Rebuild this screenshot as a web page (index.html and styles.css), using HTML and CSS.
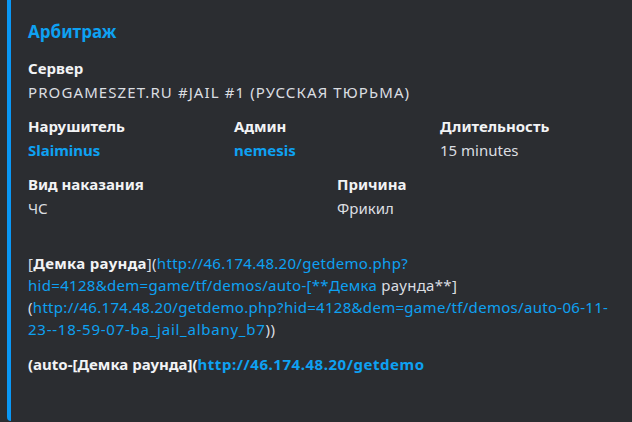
FILE: index.html
```html
<!DOCTYPE html>
<html lang="ru">
<head>
  <meta charset="UTF-8">
  <title>Арбитраж</title>
  <link rel="stylesheet" href="styles.css">
</head>
<body>

  <div class="embed">
    <div class="embed-title">Арбитраж</div>

    <div class="fields">
      <div class="field full">
        <div class="field-name">Сервер</div>
        <div class="field-value caps">PROGAMESZET.RU #JAIL #1 (РУССКАЯ ТЮРЬМА)</div>
      </div>

      <div class="field third">
        <div class="field-name">Нарушитель</div>
        <div class="field-value"><a class="mention" href="#">Slaiminus</a></div>
      </div>
      <div class="field third">
        <div class="field-name">Админ</div>
        <div class="field-value"><a class="mention" href="#">nemesis</a></div>
      </div>
      <div class="field third">
        <div class="field-name">Длительность</div>
        <div class="field-value">15 minutes</div>
      </div>

      <div class="field half">
        <div class="field-name">Вид наказания</div>
        <div class="field-value">ЧС</div>
      </div>
      <div class="field half">
        <div class="field-name">Причина</div>
        <div class="field-value">Фрикил</div>
      </div>

      <div class="field full">
        <div class="field-name blank"></div>
        <div class="field-value demo">[<b>Демка раунда</b>](<a href="#">http://46.174.48.20/getdemo.php?<br>hid=4128&amp;dem=game/tf/demos/auto-[**Демка</a> раунда**]<br>(<a href="#">http://46.174.48.20/getdemo.php?hid=4128&amp;dem=game/tf/demos/auto-06-11-<br><span class="wide">23--18-59-07-ba_jail_albany_b7</span></a>))</div>
      </div>

      <div class="field full">
        <div class="field-name">(auto-[Демка раунда](<a class="bold-link" href="#">http://46.174.48.20/getdemo</a></div>
      </div>
    </div>
  </div>

</body>
</html>
```

FILE: styles.css
```css
body {
  margin: 0;
  background-color: #2b2d31;
  font-family: "Noto Sans", "Open Sans", sans-serif;
  overflow: hidden;
}
.embed {
  margin-left: 7px;
  height: 421px;
  box-sizing: border-box;
  border-left: 4px solid #0a97f5;
  border-radius: 0 0 0 4px;
  background-color: #2b2d31;
  padding: 20px 0 0 17px;
}
.embed-title {
  color: #0ea1f2;
  font-size: 17px;
  font-weight: bold;
  line-height: 24px;
}
.fields {
  display: grid;
  grid-template-columns: repeat(6, 103px);
  row-gap: 14px;
  margin-top: 14px;
}
.field.full {
  grid-column: span 6;
}
.field.half {
  grid-column: span 3;
}
.field.third {
  grid-column: span 2;
}
.field-name {
  color: #f2f3f5;
  font-size: 15px;
  font-weight: bold;
  line-height: 20px;
  margin-bottom: 4px;
  white-space: nowrap;
}
.field-name.blank {
  height: 20px;
  margin-bottom: 0;
}
.field-value {
  color: #dbdee1;
  font-size: 15px;
  line-height: 20px;
  white-space: nowrap;
}
.field-value.caps {
  letter-spacing: 1.1px;
}
.field-value.demo {
  line-height: 22px;
  letter-spacing: 0.3px;
}
.demo .wide {
  letter-spacing: 0.75px;
}
a {
  color: #0ea1f2;
  text-decoration: none;
}
.mention {
  font-weight: bold;
}
.bold-link {
  letter-spacing: 0.55px;
}
.demo b {
  color: #f2f3f5;
}
```
